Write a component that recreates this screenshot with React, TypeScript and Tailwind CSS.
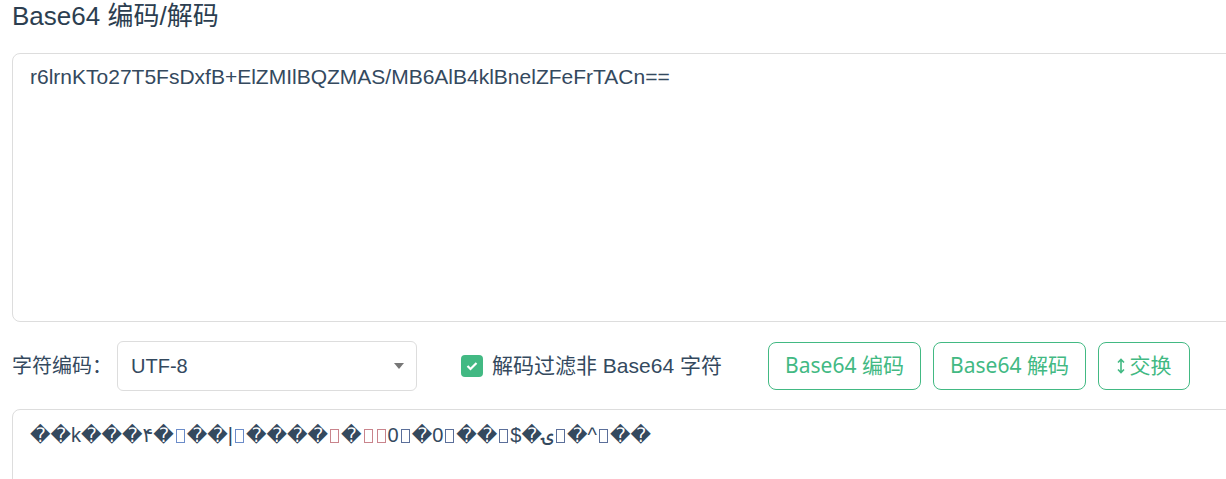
const OUT_TEXT_FONT = "font-['Liberation_Sans','DejaVu_Sans','Noto_Sans_CJK_SC',sans-serif]";

function Tofu({ tint = "#34495e" }: { tint?: string }) {
  return (
    <span
      className="mx-[2px] inline-block h-[14px] w-[9px] border align-[-1px]"
      style={{ borderColor: tint }}
    />
  );
}

function Garbled() {
  // pieces of the decoded output: strings are glyphs, objects are tofu boxes
  const seq: (string | { box: string })[] = [
    "\uFFFD\uFFFDk\uFFFD\uFFFD\uFFFD",
    "\u06F4",
    "\uFFFD",
    { box: "#6b8cc9" },
    "\uFFFD\uFFFD|",
    { box: "#6b8cc9" },
    "\uFFFD\uFFFD\uFFFD\uFFFD",
    { box: "#c9848c" },
    "\uFFFD",
    { box: "#c9848c" },
    { box: "#c9848c" },
    "0",
    { box: "#5b6f9a" },
    "\uFFFD0",
    { box: "#5b6f9a" },
    "\uFFFD\uFFFD",
    { box: "#5b6f9a" },
    "$\uFFFD",
    "\u06CD",
    { box: "#5b6f9a" },
    "\uFFFD^",
    { box: "#5b6f9a" },
    "\uFFFD\uFFFD",
  ];
  return (
    <>
      {seq.map((s, i) =>
        typeof s === "string" ? <span key={i}>{s}</span> : <Tofu key={i} tint={s.box} />
      )}
    </>
  );
}

function SwapIcon() {
  return (
    <svg width="8" height="16" viewBox="0 0 8 16" className="mr-[5px]">
      <path d="M4 1.5V14.5M1 4.5L4 1.5L7 4.5M1 11.5L4 14.5L7 11.5" fill="none" stroke="#42b983" strokeWidth="1.6" />
    </svg>
  );
}

function GreenButton({ children, w }: { children: React.ReactNode; w: string }) {
  return (
    <button
      className={`flex h-[48px] items-center justify-center rounded-[8px] border border-[#42b983] bg-white text-[21px] text-[#42b983] font-['Noto_Sans','Noto_Sans_CJK_SC',sans-serif] ${w}`}
    >
      {children}
    </button>
  );
}

export default function App() {
  return (
    <div className="h-[479px] w-full overflow-hidden bg-white text-[#34495e] font-['Liberation_Sans','Noto_Sans_CJK_SC',sans-serif]">
      <div className="w-[1260px] pl-[12px]">
        <h1 className="h-[32px] text-[26px] font-normal leading-[32px] text-[#2c3e50]">Base64 编码/解码</h1>

        <div className="mt-[21px] h-[269px] rounded-[8px] border border-[#dddddd] px-[17px] py-[8px] text-[21px] leading-[30px]">
          r6lrnKTo27T5FsDxfB+ElZMIlBQZMAS/MB6AlB4klBnelZFeFrTACn==
        </div>

        <div className="mt-[19px] flex h-[50px] items-center">
          <span className="w-[105px] text-[20px]">字符编码：</span>
          <div className="flex h-[50px] w-[300px] items-center justify-between rounded-[6px] border border-[#dddddd] pl-[13px] pr-[12px] text-[20px]">
            <span>UTF-8</span>
            <svg width="10" height="6" viewBox="0 0 10 6">
              <path d="M0 0H10L5 6Z" fill="#777777" />
            </svg>
          </div>
          <label className="ml-[44px] flex w-[263px] items-center text-[21px]">
            <span className="flex h-[22px] w-[22px] items-center justify-center rounded-[4px] bg-[#42b983]">
              <svg width="12" height="10" viewBox="0 0 12 10">
                <path d="M1.5 5L4.5 8L10.5 2" fill="none" stroke="white" strokeWidth="2.2" />
              </svg>
            </span>
            <span className="ml-[9px] whitespace-nowrap">解码过滤非 Base64 字符</span>
          </label>
          <div className="ml-[44px] flex gap-[12px]">
            <GreenButton w="w-[153px]">Base64 编码</GreenButton>
            <GreenButton w="w-[153px]">Base64 解码</GreenButton>
            <GreenButton w="w-[92px]">
              <SwapIcon />
              交换
            </GreenButton>
          </div>
        </div>

        <div className={`mt-[18px] h-[120px] rounded-[8px] border border-[#dddddd] px-[17px] py-[10px] text-[20px] leading-[30px] ${OUT_TEXT_FONT}`}>
          <Garbled />
        </div>
      </div>
    </div>
  );
}
